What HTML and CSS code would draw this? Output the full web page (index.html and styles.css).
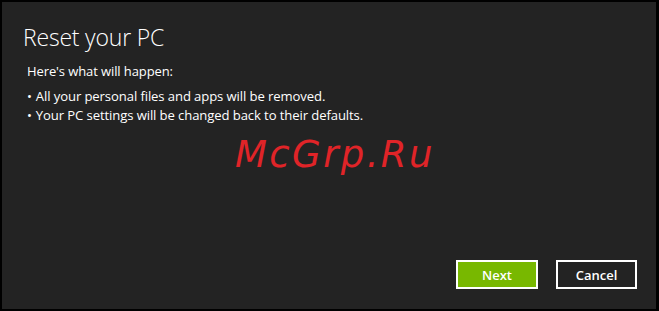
FILE: index.html
```html
<!DOCTYPE html>
<html>
<head>
<meta charset="utf-8">
<link rel="stylesheet" href="styles.css">
</head>
<body>
<div class="frame">
  <h1 class="title">Reset your PC</h1>
  <p class="intro">Here's what will happen:</p>
  <ul class="list">
    <li>All your personal files and apps will be removed.</li>
    <li>Your PC settings will be changed back to their defaults.</li>
  </ul>
  <div class="watermark">McGrp.Ru</div>
  <div class="actions">
    <button class="btn btn-next">Next</button>
    <button class="btn btn-cancel">Cancel</button>
  </div>
</div>
</body>
</html>
```
FILE: styles.css
```css
html, body {
  margin: 0;
  padding: 0;
  background: #000;
}
body {
  width: 659px;
  height: 311px;
  overflow: hidden;
}
.frame {
  margin: 2px 3px 0 2px;
  height: 307px;
  background: #232323;
  box-sizing: border-box;
  padding: 20px 0 0 21px;
  display: flex;
  flex-direction: column;
  font-family: "Open Sans", "Noto Sans", sans-serif;
  color: #fff;
}
.title {
  margin: 0;
  font-weight: 300;
  font-size: 23px;
  line-height: 30px;
  letter-spacing: -0.2px;
}
.intro {
  margin: 10px 0 0 4px;
  font-size: 13px;
  line-height: 18px;
  letter-spacing: -0.1px;
}
.list {
  list-style: none;
  margin: 7px 0 0 4px;
  padding: 0;
  font-size: 13.1px;
  line-height: 19px;
  letter-spacing: -0.1px;
}
.list li::before {
  content: "\2022";
  margin-right: 4px;
}
.watermark {
  margin: 8px 0 0 212px;
  font-family: "DejaVu Sans", sans-serif;
  font-style: italic;
  font-size: 37px;
  line-height: 44px;
  color: #e02428;
  letter-spacing: 2.4px;
}
.actions {
  margin-top: auto;
  margin-bottom: 20px;
  display: flex;
  justify-content: flex-end;
  gap: 18px;
  padding-right: 19px;
}
.btn {
  width: 82px;
  height: 29px;
  border: 2px solid #fff;
  font-family: "Open Sans", "Noto Sans", sans-serif;
  font-size: 13px;
  font-weight: 600;
  color: #fff;
  padding: 0;
}
.btn-next {
  background: #78b800;
}
.btn-cancel {
  width: 81px;
  background: #232323;
}
```
